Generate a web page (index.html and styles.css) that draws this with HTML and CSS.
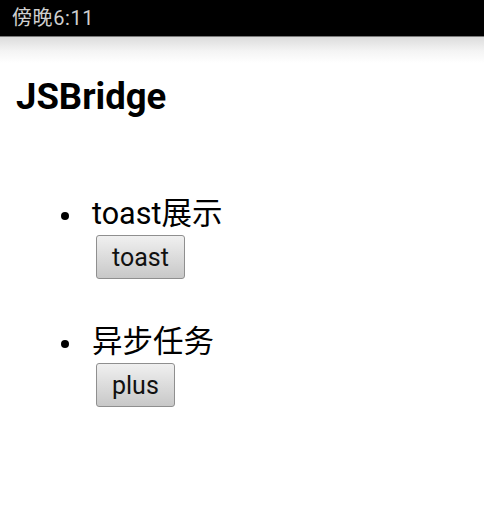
FILE: index.html
```html
<!DOCTYPE html>
<html lang="zh">
<head>
<meta charset="utf-8">
<title>JSBridge</title>
<link rel="stylesheet" href="styles.css">
</head>
<body>
<div class="status">傍晚6:11</div>
<main class="page">
  <h1 class="title">JSBridge</h1>
  <ul class="list">
    <li class="item">
      <span class="label">toast展示</span>
      <div class="row"><button class="btn">toast</button></div>
    </li>
    <li class="item">
      <span class="label">异步任务</span>
      <div class="row"><button class="btn">plus</button></div>
    </li>
  </ul>
</main>
</body>
</html>
```
FILE: styles.css
```css
html, body {
  margin: 0;
  padding: 0;
  background: #fff;
}
body {
  font-family: Roboto, "Noto Sans CJK SC", sans-serif;
  color: #000;
  height: 519px;
  overflow: hidden;
}
.status {
  height: 36px;
  background: #000;
  border-bottom: 1px solid #7a7a7a;
  color: #cfcfcf;
  font-size: 20px;
  letter-spacing: 0.6px;
  line-height: 36px;
  padding-left: 12px;
  box-sizing: content-box;
}
.page {
  background: linear-gradient(#dcdcdc, #f4f4f4 14px, #fff 26px) no-repeat;
  background-size: 100% 26px;
  padding: 39px 16px 0 16px;
  height: 480px;
  box-sizing: border-box;
}
.title {
  margin: 0;
  font-size: 36.5px;
  line-height: 42px;
  font-weight: 700;
}
.list {
  margin: 79px 0 0 0;
  padding-left: 45px;
  list-style: none;
}
.item {
  display: grid;
  grid-template-columns: 8px auto;
  column-gap: 23px;
  justify-content: start;
  font-size: 30.5px;
  line-height: 34px;
  margin-bottom: 46px;
}
.item::before {
  content: "";
  grid-column: 1;
  grid-row: 1;
  width: 8px;
  height: 8px;
  margin-top: 15px;
  border-radius: 50%;
  background: #000;
}
.label {
  grid-column: 2;
  grid-row: 1;
}
.row {
  grid-column: 2;
  grid-row: 2;
  margin-top: 4px;
}
.btn {
  font-family: Roboto, sans-serif;
  font-size: 25px;
  height: 44px;
  padding: 0 15px;
  margin: 0 0 0 4px;
  color: #111;
  border: 1px solid #8f8f8f;
  border-radius: 3px;
  background: linear-gradient(#f0f0f0, #c8c8c8);
}
```
